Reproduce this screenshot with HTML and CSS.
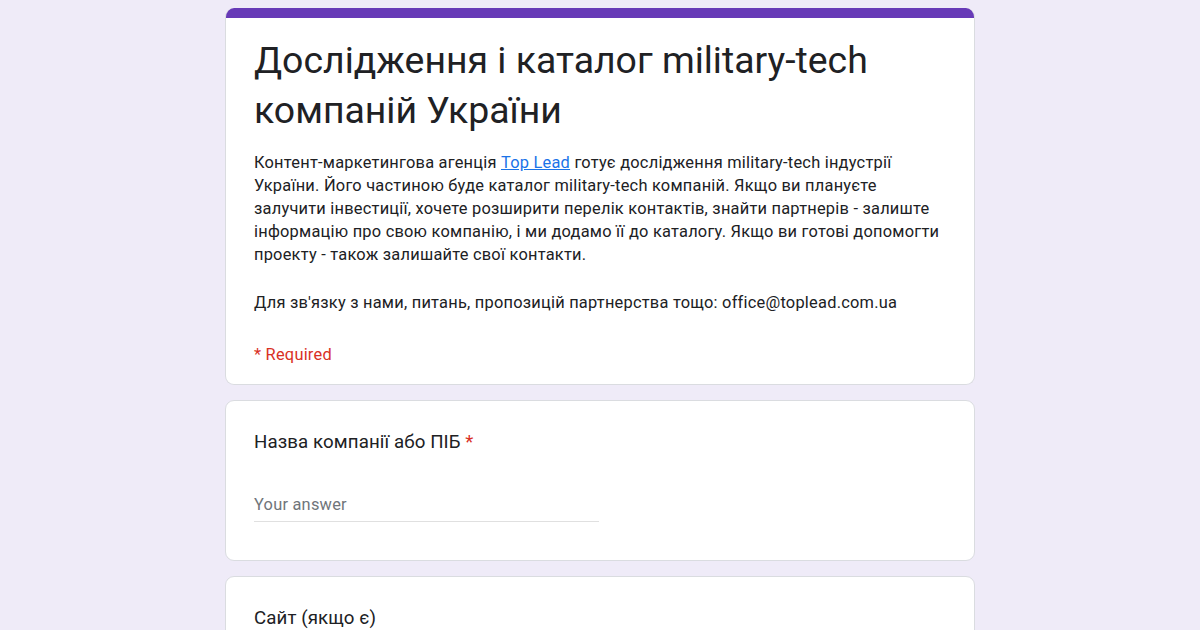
FILE: index.html
```html
<!DOCTYPE html>
<html lang="uk">
<head>
<meta charset="utf-8">
<title>Дослідження і каталог military-tech компаній України</title>
<link rel="stylesheet" href="styles.css">
</head>
<body>
<main class="form">
  <section class="card header-card">
    <div class="accent"></div>
    <div class="card-body">
      <h1 class="title">Дослідження і каталог military-tech компаній України</h1>
      <p class="desc">Контент-маркетингова агенція <a href="#" class="link">Top Lead</a> готує дослідження military-tech індустрії України. Його частиною буде каталог military-tech компаній. Якщо ви плануєте залучити інвестиції, хочете розширити перелік контактів, знайти партнерів - залиште інформацію про свою компанію, і ми додамо її до каталогу. Якщо ви готові допомогти проекту - також залишайте свої контакти.</p>
      <p class="desc">Для зв'язку з нами, питань, пропозицій партнерства тощо: office@toplead.com.ua</p>
      <p class="required">* Required</p>
    </div>
  </section>
  <section class="card question">
    <div class="q-title">Назва компанії або ПІБ <span class="star">*</span></div>
    <div class="answer">Your answer</div>
  </section>
  <section class="card question">
    <div class="q-title">Сайт (якщо є)</div>
    <div class="answer">Your answer</div>
  </section>
</main>
</body>
</html>
```

FILE: styles.css
```css
html, body {
  margin: 0;
  padding: 0;
}
body {
  background: #efebf8;
  font-family: Roboto, "Liberation Sans", sans-serif;
  color: #202124;
}
.form {
  width: 750px;
  margin: 0 auto;
  padding-top: 8px;
  display: flex;
  flex-direction: column;
  gap: 15px;
}
.card {
  background: #fff;
  border: 1px solid #dadce0;
  border-radius: 9px;
  overflow: hidden;
}
.header-card {
  border-top: none;
}
.accent {
  height: 10px;
  background: #673ab7;
}
.card-body {
  padding: 17px 28px 18px 28px;
}
.title {
  margin: 0;
  font-family: Roboto, sans-serif;
  font-weight: 400;
  font-size: 37.4px;
  line-height: 50px;
  letter-spacing: 0;
  color: #202124;
}
.desc {
  margin: 16px 0 0;
  font-size: 16.4px;
  line-height: 23px;
  letter-spacing: 0.23px;
  color: #202124;
}
.desc + .desc {
  margin-top: 25px;
}
.link {
  color: #1a73e8;
  text-decoration: underline;
}
.required {
  margin: 29px 0 0;
  font-size: 16.4px;
  line-height: 23px;
  letter-spacing: 0.23px;
  color: #d93025;
}
.question {
  padding: 29px 28px 38px;
}
.q-title {
  font-size: 18.7px;
  line-height: 24px;
  letter-spacing: 0.1px;
  color: #202124;
}
.star {
  color: #d93025;
}
.answer {
  margin-top: 40px;
  width: 345px;
  font-size: 16.4px;
  line-height: 22px;
  letter-spacing: 0.23px;
  color: #70757a;
  padding-bottom: 5px;
  border-bottom: 1px solid #e0e0e0;
}
```
